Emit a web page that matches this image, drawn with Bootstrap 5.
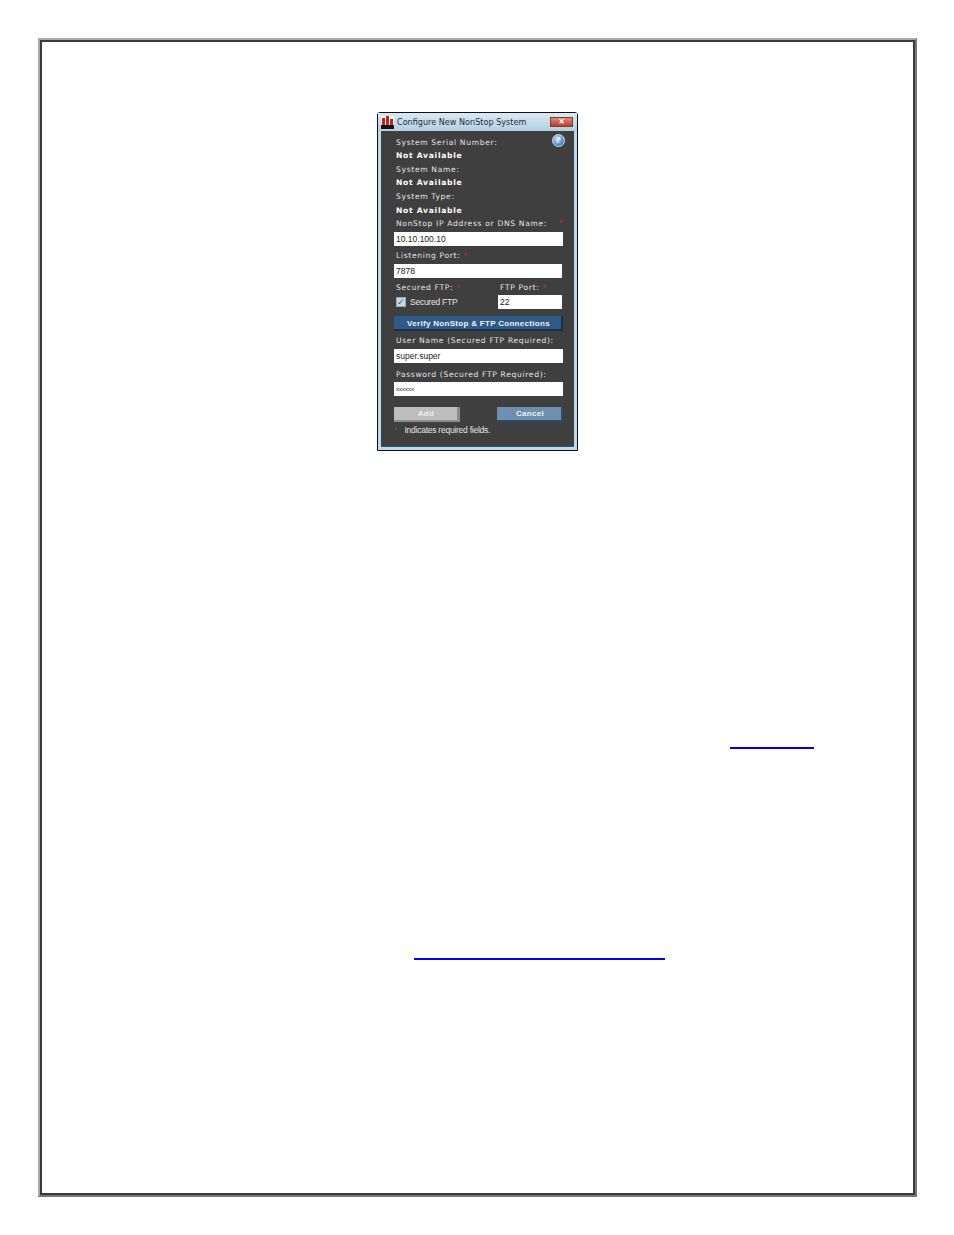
<!DOCTYPE html>
<html lang="en"><head><meta charset="utf-8"><title>Configure New NonStop System</title>
<link href="https://cdn.jsdelivr.net/npm/bootstrap@5.3.0/dist/css/bootstrap.min.css" rel="stylesheet">
<style>
html,body{background:#fff;margin:0}
body{padding:38px 37px 38px 38px;font-family:"DejaVu Sans",sans-serif}
.page-frame{height:1159px;border:2px solid #a9a9a9;padding-top:72px;box-shadow:inset 0 0 0 2px #3a3a3a;border-right-color:#777;border-bottom-color:#777}
.dlg{width:201px;height:339px;margin-left:337px;border:1px solid #111;border-radius:3px 3px 0 0;background:#bfd8ea;padding:0 3px 3px 3px}
.dlg-title{height:18px;gap:3px;font-size:8.1px;color:#20303c;background:linear-gradient(#dbe9f3,#b4cfe2);margin:0 -3px;padding:0 4px 0 3px}
.dlg-close{width:23px;height:10px;background:linear-gradient(#e08a78,#b8402e);border:1px solid #7d3a30;color:#fff;font-size:8px;line-height:8px;text-align:center;font-weight:700}
.dlg-body{height:316px;background:#3f3f3f;padding:4.6px 11px 0 13px;position:relative;border-bottom:1px solid #1c5f86;color:#e4e4e4;font-size:7.6px;letter-spacing:.66px}
.fld{height:13.6px;line-height:13.6px;padding-left:2px;white-space:nowrap}
.fld.na{color:#fff;font-weight:700;letter-spacing:.72px}
.req{color:#d2262a;font-size:7px}
.fake-input.form-control{height:14px;width:169px;min-height:0;border-radius:0;border:0;padding:0 2px;font:8.5px/14px "Liberation Sans",sans-serif;color:#222;background:#fff;letter-spacing:0}
.fake-input.w-168{width:168px}
.fake-input.short{width:64px}
.tiny-text{font-size:6px !important}
.chk{width:10px;height:10px;margin-left:2px;background:#c9d7e2;border:1px solid #9aa;color:#2b4fa8;font-size:9px;line-height:8px;text-align:center}
.dlg-btn.btn{height:15px;padding:0;border:0;border-radius:0;font:700 8px/14px "Liberation Sans",sans-serif;letter-spacing:.3px;color:#eef2f6}
.btn-verify.btn{width:169px;background:#2e5a85;box-shadow:inset -2px -2px 0 #17324f}
.btn-add.btn{width:66px;background:#bdbdbd;box-shadow:inset -3px -2px 0 #8c8c8c;color:#eee;padding-right:2px}
.btn-cancel.btn{width:66px;background:#6f8fae;box-shadow:inset -2px -2px 0 #2a4a6b}
.help-dot{position:absolute;right:9px;top:3px;width:13px;height:13px;border-radius:50%;background:radial-gradient(circle at 40% 35%,#cfe3f5,#3f7fc0 70%);border:1px solid #d6e4ef;color:#fff;font:italic 700 9px/11px "Liberation Serif",serif;text-align:center}
.note{font:8.5px/12px "Liberation Sans",sans-serif;color:#e4e4e4;letter-spacing:-.25px}
.rule-a,.rule-b{display:block;height:2px}
.rule-a{width:84px;margin:296px 0 0 690px;background:#0000d8}
.rule-b{width:251px;margin:209px 0 0 374px;background:#0000f0}
.sp-1{height:1px}.sp-1h{height:1.4px}.sp-2{height:2px}.sp-3{height:3px}.sp-5{height:5px}.sp-7{height:7px}.sp-11{height:11px}
</style></head><body>
<div class="page-frame">
<div class="dlg d-flex flex-column">
 <div class="dlg-title d-flex align-items-center">
  <svg width="13" height="13" viewBox="0 0 13 13"><rect width="13" height="13" fill="#fff"/><rect x="1" y="2" width="3" height="7" fill="#c8201c"/><rect x="5" y="0" width="3" height="9" fill="#c8201c"/><rect x="9" y="3" width="3" height="6" fill="#c8201c"/><rect y="9" width="13" height="4" fill="#111"/></svg>
  <span class="flex-grow-1">Configure New NonStop System</span>
  <span class="dlg-close">×</span>
 </div>
 <div class="dlg-body">
  <span class="help-dot">?</span>
  <div class="fld">System Serial Number:</div>
  <div class="fld na">Not Available</div>
  <div class="fld">System Name:</div>
  <div class="fld na">Not Available</div>
  <div class="fld">System Type:</div>
  <div class="fld na">Not Available</div>
  <div class="fld d-flex justify-content-between">NonStop IP Address or DNS Name: <span class="req">*</span></div>
  <div class="sp-1h"></div>
  <input class="form-control fake-input" value="10.10.100.10">
  <div class="sp-3"></div>
  <div class="fld">Listening Port: <span class="req">*</span></div>
  <div class="sp-1"></div>
  <input class="form-control fake-input w-168" value="7878">
  <div class="sp-3"></div>
  <div class="d-flex"><div class="fld" style="width:104px">Secured FTP: <span class="req">*</span></div><div class="fld">FTP Port: <span class="req">*</span></div></div>
  <div class="sp-1"></div>
  <div class="d-flex align-items-center">
   <span class="chk">✓</span><span class="note ms-1" style="width:88px">Secured FTP</span>
   <input class="form-control fake-input short" value="22">
  </div>
  <div class="sp-7"></div>
  <button class="btn dlg-btn btn-verify d-block">Verify NonStop &amp; FTP Connections</button>
  <div class="sp-3"></div>
  <div class="fld">User Name (Secured FTP Required):</div>
  <div class="sp-1"></div>
  <input class="form-control fake-input" value="super.super">
  <div class="sp-5"></div>
  <div class="fld">Password (Secured FTP Required):</div>
  <input class="form-control fake-input tiny-text" value="xxxxxx">
  <div class="sp-11"></div>
  <div class="d-flex justify-content-between">
   <button class="btn dlg-btn btn-add">Add</button>
   <button class="btn dlg-btn btn-cancel">Cancel</button>
  </div>
  <div class="sp-2"></div>
  <div class="note d-flex gap-2"><span class="req">*</span><span>Indicates required fields.</span></div>
 </div>
</div>
<span class="rule-a"></span>
<span class="rule-b"></span>
</div>
<script src="https://cdn.jsdelivr.net/npm/bootstrap@5.3.0/dist/js/bootstrap.bundle.min.js"></script>
</body></html>
